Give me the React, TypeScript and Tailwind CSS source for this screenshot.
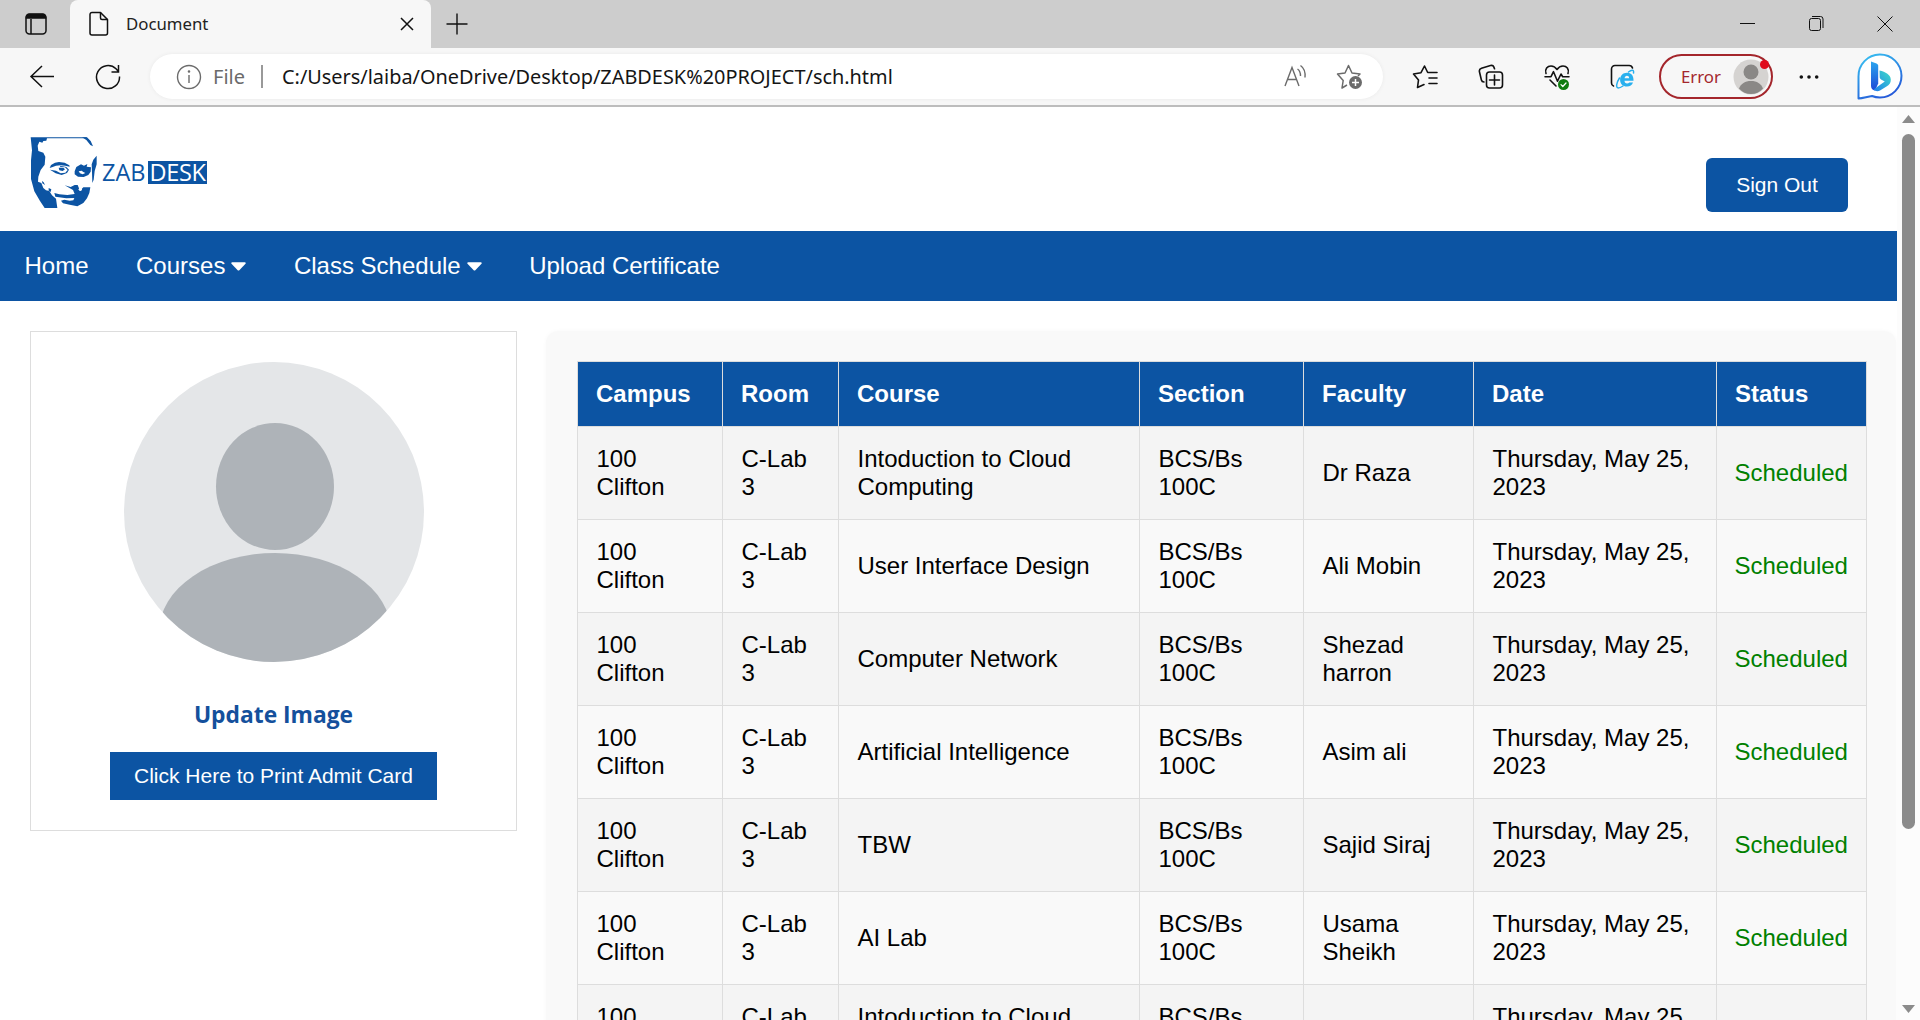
import type { ReactNode } from 'react';

const headings = ['Campus', 'Room', 'Course', 'Section', 'Faculty', 'Date', 'Status'];
const rows: [string, string][] = [
  ['Intoduction to Cloud Computing', 'Dr Raza'],
  ['User Interface Design', 'Ali Mobin'],
  ['Computer Network', 'Shezad harron'],
  ['Artificial Intelligence', 'Asim ali'],
  ['TBW', 'Sajid Siraj'],
  ['AI Lab', 'Usama Sheikh'],
  ['Intoduction to Cloud Computing', 'Dr Raza'],
];

function TabBar() {
  return (
    <div className="flex h-[48px] shrink-0 items-stretch bg-[#cdcdcd]">
      <div className="flex w-[70px] items-center justify-center pl-[2px]">
        <svg width="24" height="24" viewBox="0 0 24 24" fill="none" stroke="#111" strokeWidth="1.5">
          <rect x="2" y="2" width="20" height="20" rx="3.5" />
          <path d="M2.5 6V5A2.5 2.5 0 0 1 5 2.5h14A2.5 2.5 0 0 1 21.500 5v1z" fill="#111" />
          <path d="M7 7v15" />
        </svg>
      </div>
      <div className="flex w-[361px] items-center rounded-t-[8px] bg-[#f7f7f7] pl-[19px]">
        <svg width="20" height="26" viewBox="0 0 20 26" fill="none" stroke="#111" strokeWidth="1.5" strokeLinejoin="round">
          <path d="M3 1.500h8.500l7 7V22a2 2 0 0 1-2 2H3a2 2 0 0 1-2-2V3.500a2 2 0 0 1 2-2z" />
          <path d="M11.500 1.500V7A1.500 1.500 0 0 0 13 8.500h5.500" />
        </svg>
        <span className="ml-[17px] w-[274px] text-[16.800px] text-[#222]">Document</span>
        <svg width="14" height="14" viewBox="0 0 14 14" stroke="#111" strokeWidth="1.500">
          <path d="M1 1l12 12M13 1L1 13" />
        </svg>
      </div>
      <div className="flex flex-1 items-center pl-[15px]">
        <svg width="22" height="22" viewBox="0 0 22 22" stroke="#111" strokeWidth="1.400">
          <path d="M11 .5v21M.5 11h21" />
        </svg>
      </div>
      <svg className="mr-[27px] self-center" width="155" height="20" viewBox="0 0 155 20" fill="none" stroke="#111" strokeWidth="1">
        <path d="M2 9.500h15" />
        <rect x="71.500" y="4.500" width="11" height="12" rx="2" />
        <path d="M74 2.500h8.500A2.500 2.500 0 0 1 85 5v9" />
        <path d="M139.500 2.500l15 15M154.500 2.500l-15 15" />
      </svg>
    </div>
  );
}

function BarIcon({ width = 26, children }: { width?: number; children: ReactNode }) {
  return (
    <svg className="shrink-0" width={width} height="26" viewBox={`0 0 ${width} 26`} fill="none" stroke="#111" strokeWidth="1.600" strokeLinejoin="round" strokeLinecap="round">
      {children}
    </svg>
  );
}

function Toolbar() {
  return (
    <div className="flex h-[59px] shrink-0 items-center border-b-2 border-[#bdbdbd] bg-[#f7f7f7]">
      <svg className="ml-[29px] shrink-0" width="26" height="24" viewBox="0 0 26 24" fill="none" stroke="#111" strokeWidth="1.500">
        <path d="M25 11.500H2M13 1L2 11.500 13 22" />
      </svg>
      <svg className="ml-[40px] shrink-0" width="26" height="26" viewBox="0 0 26 26" fill="none" stroke="#111" strokeWidth="1.500">
        <path d="M24.500 12.500A11.500 11.500 0 1 1 21 4.800L23 7M23.500 1v7h-7" />
      </svg>
      <div className="ml-[29px] flex h-[45px] w-[1233px] shrink-0 items-center rounded-full bg-white pr-[17px] shadow-[0_0_4px_rgba(0,0,0,0.06)]">
        <svg className="ml-[26px] shrink-0" width="26" height="26" viewBox="0 0 26 26" fill="none" stroke="#6b6b6b" strokeWidth="1.400">
          <circle cx="13" cy="13" r="11.500" />
          <path d="M13 11v8" />
          <circle cx="13" cy="7.500" r=".6" fill="#6b6b6b" />
        </svg>
        <span className="ml-[11px] w-[48px] text-[20px] text-[#6b6b6b]">File</span>
        <span className="h-[23px] w-[2px] bg-[#999]" />
        <span className="ml-[19px] flex-1 whitespace-nowrap text-[19.900px] text-[#151515]">
          C:/Users/laiba/OneDrive/Desktop/ZABDESK%20PROJECT/sch.html
        </span>
        <svg className="mr-[-1px] shrink-0" width="28" height="26" viewBox="0 0 28 26" fill="none" stroke="#6b6b6b" strokeWidth="1.400">
          <path d="M2 22L9 3.500 16 22M4.500 15.500h9M14.500 5c2 1.300 3 3.500 3 7M17.500 1.500c3.500 2.500 5 7 4.500 12" />
        </svg>
        <svg className="ml-[26px] shrink-0" width="30" height="28" viewBox="0 0 30 28" fill="none" stroke="#6b6b6b" strokeWidth="1.500" strokeLinejoin="round">
          <path d="M11 22l-5 3 1.200-7.500L1.500 11l7.500-1L12.500 2.500 16 10l8 1-2 2" />
          <circle cx="19.500" cy="19.500" r="6.500" fill="#6b6b6b" stroke="none" />
          <path d="M19.500 16v7M16 19.500h7" stroke="#fff" />
        </svg>
      </div>
      <div className="ml-[29px] flex shrink-0 gap-[40px]">
        <BarIcon>
          <path d="M12 20.500L5.500 23.500 6.500 16 1.500 10l7.500-1.300L12.500 2l3.200 6.500H25M17 14h8M17 19.500h8" />
        </BarIcon>
        <BarIcon>
          <path d="M6 18c-1.500 0-2.300-.7-2.600-2L1.500 8c-.5-2 .2-3.200 2-3.800L12.500 1.500c1.800-.5 2.800 0 3.400 1.600l.6 1.700" />
          <rect x="8.500" y="8" width="16" height="16" rx="3" />
          <path d="M16.500 11v10M11.500 16h10" />
        </BarIcon>
        <BarIcon>
          <path d="M2 9.500C.5 5 3.500 2 7 2c2.800 0 4.500 1.300 6 3.500C14.500 3.300 16.200 2 19 2c3.500 0 6.500 3 5 7.500M1 12.700h6l2.500-5 4 9.500L17 10l1.700 2.700H25M6 16l6 6" />
          <circle cx="19.500" cy="20.500" r="5.500" fill="#107c10" stroke="none" />
          <path d="M17 20.700l1.800 1.800 3.200-3.500" stroke="#fff" strokeWidth="1.200" />
        </BarIcon>
        <BarIcon>
          <path d="M3.500 22C2 21.500 1.500 20.500 1.500 19V5A3.500 3.500 0 0 1 5 1.500h14A3.500 3.500 0 0 1 22.500 4" />
          <path d="M23 18.500c-.9 2.700-3 4-6 4-4.200 0-6.900-2.700-6.900-6.800 0-4.200 2.800-7 6.900-7 4.300 0 6.800 2.900 6.500 8.100h-9c.1 1.800 1 2.800 2.600 2.800 1 0 1.700-.4 2.100-1.100zM14.600 14.300h4.600c-.1-1.700-.9-2.500-2.300-2.500-1.300 0-2.100.9-2.300 2.500z" fill="#29b0ee" stroke="none" fillRule="evenodd" />
          <path d="M9.500 14C6.500 18.500 5.500 24 8.300 24c1.300 0 2.900-.8 4.700-2M18.500 8c3-2.300 5.700-2.500 5 1" stroke="#29b0ee" strokeWidth="1.500" />
        </BarIcon>
      </div>
      <div className="relative ml-[23px] flex h-[45px] w-[114px] shrink-0 items-center rounded-full border-2 border-[#a4262c]">
        <span className="ml-[20px] text-[16.800px] text-[#a4262c]">Error</span>
        <svg className="absolute top-[3px] left-[72px]" width="36" height="36" viewBox="0 0 36 36">
          <circle cx="18" cy="18" r="17.500" fill="#d5d3d1" />
          <circle cx="18" cy="13" r="7.500" fill="#8a8886" />
          <path d="M6 29.500c2-5 6-7.500 12-7.500s10 2.500 12 7.500c-3.300 3.700-7.400 5.500-12 5.500s-8.700-1.800-12-5.500z" fill="#8a8886" />
        </svg>
        <span className="absolute top-[4px] right-[2px] size-[9px] rounded-full bg-[#e00b1c]" />
      </div>
      <svg className="ml-[26px] shrink-0" width="20" height="6" viewBox="0 0 20 6" fill="#111">
        <circle cx="2.300" cy="3" r="1.800" />
        <circle cx="10" cy="3" r="1.800" />
        <circle cx="17.700" cy="3" r="1.800" />
      </svg>
      <svg className="ml-[37px] shrink-0" width="48" height="48" viewBox="-1 -1 48 48">
        <defs>
          <linearGradient id="ring" x1="0.200" y1="0" x2="0.700" y2="1">
            <stop offset="0" stopColor="#37bdf0" />
            <stop offset="1" stopColor="#2455d8" />
          </linearGradient>
          <linearGradient id="stem" x1="0" y1="0" x2="0" y2="1">
            <stop offset="0" stopColor="#2ba5ee" />
            <stop offset="1" stopColor="#1b48d6" />
          </linearGradient>
          <linearGradient id="bowl" x1="1" y1="0" x2="0" y2="1">
            <stop offset="0" stopColor="#3edcc8" />
            <stop offset="1" stopColor="#1f7dec" />
          </linearGradient>
        </defs>
        <path d="M1.500 44.500V22.500A21.500 21.500 0 1 1 23 43.500c-3 0-5.500-.5-8-1.500-4 .5-9 2-13.500 2.500z" fill="#fff" stroke="url(#ring)" strokeWidth="2" strokeLinejoin="round" />
        <path d="M14 7.500l5.500 2c1 .5 1.700 1.200 1.700 2.300V29.500l-3.200 7c-2.700-.5-4-2.200-4-4.500z" fill="url(#stem)" />
        <path d="M22.500 16.500c6 1.500 11.300 4 11.300 9.200 0 3.200-1.500 5.200-4.300 6.800l-6.500 4c-2.300 1.200-5 .7-6.500-1l11.300-8-3.300-1.800c-1-.6-1.500-1.200-1.800-2.300z" fill="url(#bowl)" />
      </svg>
    </div>
  );
}

function Logo() {
  return (
    <div className="mt-[30px] ml-[30px] flex items-start text-[#0c54a3]">
      <svg width="68" height="72" viewBox="90 80 204 216" fill="#0c54a3">
        <path d="M92 81h168v3H141l-2 7-9 1-3 5-9-3-5 12 2 16 15 5 6 12-2 24-12 16-7 20-1 15 10 4 6 15 8 7 10 2 8 13 12 10 4 28h-38l-14-21-17-29-10-37V150l3-30z" />
        <path d="M246 81h15l11 11 7 16-8-4-12-15z" />
        <path d="M290 136v26l-6 20-3 26-4 10-1-32-1-24 5-14z" />
        <path d="M149 173l4-9 12-7 12-2 17 2 14 8 1 4-13-3-14-1-14 1-10 4z" />
        <path d="M150 178l18 3 14 8 14-2 7-8-8-8-15-2v-3l19 4 8 8-6 10-16 6-18-5z" />
        <path d="M176 172h14l5 5-7 5-10-2z" />
        <path d="M224 183l5-13 14-8 9 4 10-5-2 8 13 2-1 13-7 10-14 6-17-1-10-7zM236 183l4 6 8 3 8-4-6-3-5-4z" fillRule="evenodd" />
        <path d="M194 225l18 5 12-6h9l7 17 10-10h21l-3 17-7 16-11 14-18 10-23-5-20-4-6-8 10-3 16 3 11-1 3-7-24 1-33-5-3-11 15 4 24 2 22-3-5-12z" />
        <circle cx="241" cy="237" r="5" fill="#fff" />
        <path d="M126 212l5 4 4 8-8-5zM146 233l8 4-2 8-6-4z" />
      </svg>
      <div className="mt-[24px] ml-[4px] flex h-[23px] items-center font-['Open_Sans',sans-serif] text-[23.500px] leading-[23px]">
        <span className="w-[46px]">ZAB</span>
        <span className="flex h-[23px] w-[59px] items-center justify-center bg-[#0c54a3] tracking-[-0.400px] text-white">DESK</span>
      </div>
    </div>
  );
}

function Caret() {
  return (
    <svg className="ml-[6px]" width="15" height="9" viewBox="0 0 15 9" fill="#fff">
      <path d="M1.200.3h12.600c.9 0 1.200.9.7 1.500L8.300 8.200c-.5.500-1.100.5-1.600 0L.5 1.800C0 1.200.3.300 1.200.3z" />
    </svg>
  );
}

function Schedule() {
  return (
    <table className="w-[1289px] table-fixed border-collapse leading-[28px] text-black">
      <colgroup>
        <col className="w-[145px]" />
        <col className="w-[116px]" />
        <col className="w-[301px]" />
        <col className="w-[164px]" />
        <col className="w-[170px]" />
        <col className="w-[243px]" />
        <col className="w-[150px]" />
      </colgroup>
      <thead>
        <tr className="h-[65px] bg-[#0c54a3] text-left text-white">
          {headings.map((h) => (
            <th key={h} className="border border-[#ddd] px-[18px] font-bold">{h}</th>
          ))}
        </tr>
      </thead>
      <tbody>
        {rows.map(([course, faculty], i) => (
          <tr key={i} className="h-[93px] odd:bg-[#f4f4f4]">
            {['100 Clifton', 'C-Lab 3', course, 'BCS/Bs 100C', faculty, 'Thursday, May 25, 2023'].map((text, c) => (
              <td key={c} className="border border-[#ddd] pr-[17px] pl-[18.500px]">{text}</td>
            ))}
            <td className="border border-[#ddd] px-[17.500px] text-[#008000]">Scheduled</td>
          </tr>
        ))}
      </tbody>
    </table>
  );
}

function Scrollbar() {
  return (
    <div className="flex w-[23px] shrink-0 flex-col items-center bg-[#fcfcfc] pt-[8px] pb-[7px]">
      <svg width="13" height="8" viewBox="0 0 13 8" fill="#8b8b8b"><path d="M6.500 0L13 8H0z" /></svg>
      <div className="mt-[11px] h-[695px] w-[13px] rounded-full bg-[#8b8b8b]" />
      <svg className="mt-auto" width="13" height="8" viewBox="0 0 13 8" fill="#8b8b8b"><path d="M6.500 8L13 0H0z" /></svg>
    </div>
  );
}

export default function App() {
  return (
    <div className="flex h-[1020px] w-[1920px] flex-col overflow-hidden bg-white font-['Noto_Sans',sans-serif]">
      <TabBar />
      <Toolbar />
      <div className="flex min-h-0 flex-1 font-['Liberation_Sans',Arial,sans-serif] text-[24px]">
        <div className="flex min-w-0 flex-1 flex-col overflow-hidden">
          <header className="flex h-[124px] shrink-0 justify-between">
            <Logo />
            <button className="mt-[51px] mr-[49px] h-[54px] w-[142px] rounded-[6px] bg-[#0c54a3] text-[21px] text-white">Sign Out</button>
          </header>
          <nav className="flex h-[70px] shrink-0 items-center gap-[47.500px] bg-[#0c54a3] pl-[24.500px] text-white">
            <a>Home</a>
            <a className="flex items-center">Courses<Caret /></a>
            <a className="flex items-center">Class Schedule<Caret /></a>
            <a>Upload Certificate</a>
          </nav>
          <main className="flex min-h-0 flex-1 items-start pt-[30px] pl-[30px]">
            <aside className="flex h-[500px] w-[487px] shrink-0 flex-col items-center border border-[#ddd] pt-[30px]">
              <svg className="shrink-0" width="300" height="300" viewBox="0 0 300 300">
                <clipPath id="avatar"><circle cx="150" cy="150" r="150" /></clipPath>
                <g clipPath="url(#avatar)">
                  <rect width="300" height="300" fill="#e4e6e8" />
                  <ellipse cx="151" cy="124.500" rx="59" ry="63.500" fill="#aeb3b8" />
                  <path d="M35 270A116 79 0 0 1 267 270V300H35z" fill="#aeb3b8" />
                </g>
              </svg>
              <p className="mt-[36px] h-[34px] font-['Open_Sans',sans-serif] text-[22.800px] leading-[34px] font-bold text-[#14509c]">Update Image</p>
              <button className="mt-[20px] h-[48px] w-[327px] bg-[#0c54a3] text-[21px] text-white">Click Here to Print Admit Card</button>
            </aside>
            <section className="ml-[29px] h-[900px] w-[1350px] shrink-0 rounded-[12px] bg-[#f9f9f9] pt-[30px] pl-[31px] shadow-[0_0_4px_rgba(0,0,0,0.03)]">
              <Schedule />
            </section>
          </main>
        </div>
        <Scrollbar />
      </div>
    </div>
  );
}
